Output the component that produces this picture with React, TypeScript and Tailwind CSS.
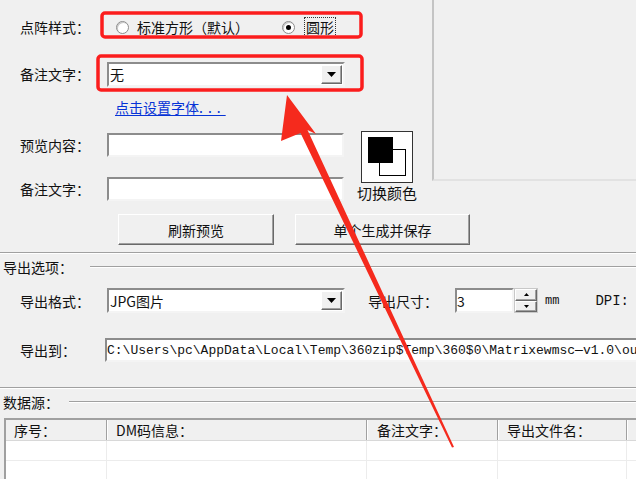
import React from 'react'

const sunken =
    'bg-white border-2 border-t-[#8c8c8c] border-l-[#8c8c8c] border-r-[#f4f4f4] border-b-[#f4f4f4]'
const raised =
    'bg-[#f0f0f0] border border-t-white border-l-white border-r-[#696969] border-b-[#696969] shadow-[inset_-1px_-1px_0_#a0a0a0]'

function Label({ text, w = 'w-[87px]' }: { text: string; w?: string }) {
    return <div className={`${w} shrink-0 leading-none`}>{text}</div>
}

function DropButton() {
    return (
        <div className={`${raised} w-[21px] h-full flex items-center justify-center`}>
            <svg width="9" height="5" viewBox="0 0 9 5">
                <path d="M0 0h9L4.5 5z" fill="#000" />
            </svg>
        </div>
    )
}

function Combo({ value, w }: { value: string; w: string }) {
    return (
        <div className={`${sunken} ${w} shrink-0 h-[25px] flex items-stretch`}>
            <div className="flex-1 flex items-center pl-[1px] leading-none">{value}</div>
            <div className="py-[1px] pr-[1px]">
                <DropButton />
            </div>
        </div>
    )
}

function Radio({ checked }: { checked?: boolean }) {
    return (
        <div className="w-[13px] h-[13px] rounded-full border border-[#8c8c8c] bg-white flex items-center justify-center shadow-[inset_1px_1px_0_#c8c8c8]">
            {checked && <div className="w-[5px] h-[5px] rounded-full bg-black" />}
        </div>
    )
}

function GroupTitle({ text, lineStart }: { text: string; lineStart: string }) {
    return (
        <div className="flex items-center h-[18px]">
            <div className="pl-[3px] leading-none">{text}</div>
            <div className={`${lineStart} flex-1 border-t border-b border-t-[#a0a0a0] border-b-white`} />
        </div>
    )
}

function HeaderCell({ text, w, pl }: { text: string; w: string; pl: string }) {
    return (
        <div className={`${w} ${pl} shrink-0 h-full flex items-center leading-none border-r border-r-[#a0a0a0] shadow-[1px_0_0_#ffffff]`}>
            {text}
        </div>
    )
}

function BodyRow() {
    const cols = ['w-[101px]', 'w-[260px]', 'w-[131px]', 'w-[129px]']
    return (
        <div className="flex h-[20px] border-b border-[#ececec]">
            {cols.map((c, i) => (
                <div key={i} className={`${c} shrink-0 border-r border-[#ececec]`} />
            ))}
            <div className="flex-1" />
        </div>
    )
}

export default function App() {
    return (
        <div className="relative w-[636px] h-[479px] overflow-hidden bg-[#f0f0f0] text-[14px] text-[#111] font-['Noto_Sans_CJK_SC',sans-serif]">
            {/* 上半部分 */}
            <div className="flex h-[252px]">
                <div className="w-[432px] shrink-0 pl-[20px] flex flex-col">
                    <div className="mt-[15px] h-[24px] flex items-center">
                        <Label text="点阵样式：" />
                        <div className="ml-[9px]">
                            <Radio />
                        </div>
                        <div className="ml-[8px] leading-none">标准方形（默认）</div>
                        <div className="ml-[33px]">
                            <Radio checked />
                        </div>
                        <div className="ml-[9px] px-[1px] py-[2px] border border-dotted border-[#333] leading-none">圆形</div>
                    </div>

                    <div className="mt-[23px] h-[24px] flex items-center">
                        <Label text="备注文字：" />
                        <Combo value="无" w="w-[238px]" />
                    </div>

                    <div className="mt-[12px] h-[18px] flex items-center pl-[95px]">
                        <span className="text-[#0633d6] underline underline-offset-2 leading-none">
                            点击设置字体<span className="tracking-[5px]">...</span>
                        </span>
                    </div>

                    <div className="mt-[15px] h-[70px] flex">
                        <div className="flex flex-col">
                            <div className="mt-[2px] h-[24px] flex items-center">
                                <Label text="预览内容：" />
                                <div className={`${sunken} w-[237px] shrink-0 h-[24px]`} />
                            </div>
                            <div className="mt-[20px] h-[24px] flex items-center">
                                <Label text="备注文字：" />
                                <div className={`${sunken} w-[237px] shrink-0 h-[24px]`} />
                            </div>
                        </div>
                        <div className="ml-[13px] flex flex-col items-start">
                            <div className="ml-[4px] w-[52px] h-[52px] bg-white border border-[#333]">
                                <svg width="50" height="50" viewBox="0 0 50 50">
                                    <rect x="17.5" y="17.5" width="26" height="26" fill="white" stroke="#000" />
                                    <rect x="6" y="5" width="25" height="26" fill="#000" />
                                </svg>
                            </div>
                            <div className="mt-[2px] text-[15px] leading-[16px]">切换颜色</div>
                        </div>
                    </div>

                    <div className="mt-[13px] h-[31px] flex">
                        <div className={`${raised} ml-[98px] w-[156px] shrink-0 h-full flex items-center justify-center leading-none`}>
                            刷新预览
                        </div>
                        <div className={`${raised} ml-[21px] w-[175px] shrink-0 h-full flex items-center justify-center leading-none`}>
                            单个生成并保存
                        </div>
                    </div>
                </div>
                <div className="flex-1 h-[181px] border-l-2 border-b-2 border-l-[#c4c4c4] border-b-[#e2e2e2]" />
            </div>

            <div className="border-t border-b border-t-[#a0a0a0] border-b-white" />

            {/* 导出选项 */}
            <div className="mt-[4px]">
                <GroupTitle text="导出选项：" lineStart="ml-[17px]" />
            </div>

            <div className="mt-[12px] h-[25px] pl-[20px] flex items-center">
                <Label text="导出格式：" />
                <Combo value="JPG图片" w="w-[238px]" />
                <div className="ml-[23px]">
                    <Label text="导出尺寸：" />
                </div>
                <div className={`${sunken} w-[59px] shrink-0 h-[25px] flex items-center leading-none`}>3</div>
                <div className="w-[24px] shrink-0 h-[25px] flex flex-col border border-[#c8c8c8]">
                    <div className={`${raised} flex-1 flex items-center justify-center`}>
                        <svg width="5" height="3" viewBox="0 0 5 3">
                            <path d="M0 3h5L2.5 0z" fill="#000" />
                        </svg>
                    </div>
                    <div className={`${raised} flex-1 flex items-center justify-center`}>
                        <svg width="5" height="3" viewBox="0 0 5 3">
                            <path d="M0 0h5L2.5 3z" fill="#000" />
                        </svg>
                    </div>
                </div>
                <div className="ml-[7px] font-['Liberation_Mono',monospace] text-[12px] leading-none">mm</div>
                <div className="ml-[36px] font-['Liberation_Mono',monospace] text-[14px] leading-none">DPI:</div>
            </div>

            <div className="mt-[25px] h-[24px] pl-[20px] flex items-center">
                <Label text="导出到：" w="w-[85px]" />
                <div className={`${sunken} w-[560px] shrink-0 h-[24px] flex items-center overflow-hidden whitespace-nowrap font-['Liberation_Mono',monospace] text-[13px] leading-none`}>
                    C:\Users\pc\AppData\Local\Temp\360zip$Temp\360$0\Matrixewmsc—v1.0\ou
                </div>
            </div>

            <div className="mt-[25px] border-t border-b border-t-[#a0a0a0] border-b-white" />

            {/* 数据源 */}
            <div className="mt-[4px]">
                <GroupTitle text="数据源：" lineStart="ml-[10px]" />
            </div>

            <div className="mt-[7px] ml-[4px] border-l-2 border-t-2 border-l-[#a0a0a0] border-t-[#a0a0a0] bg-white">
                <div className="flex h-[21px] bg-[#f0f0f0] border-b border-[#d8d8d8]">
                    <HeaderCell text="序号：" w="w-[101px]" pl="pl-[8px]" />
                    <HeaderCell text="DM码信息：" w="w-[260px]" pl="pl-[9px]" />
                    <HeaderCell text="备注文字：" w="w-[131px]" pl="pl-[10px]" />
                    <HeaderCell text="导出文件名：" w="w-[129px]" pl="pl-[9px]" />
                    <div className="flex-1" />
                </div>
                <BodyRow />
                <BodyRow />
                <BodyRow />
            </div>

            {/* 标注：红框与箭头 */}
            <svg className="absolute left-0 top-0 pointer-events-none" width="636" height="479" viewBox="0 0 636 479">
                <rect x="102" y="13" width="259" height="24" rx="3" fill="none" stroke="#fb1d1d" strokeWidth="3.5" />
                <rect x="98" y="56" width="264" height="34" rx="3" fill="none" stroke="#fb1d1d" strokeWidth="3.5" />
                <polygon
                    points="287,95 316,134 307.5,130 454,447 452,447.5 300.5,133 281,141"
                    fill="#f52a1d"
                />
            </svg>
        </div>
    )
}
